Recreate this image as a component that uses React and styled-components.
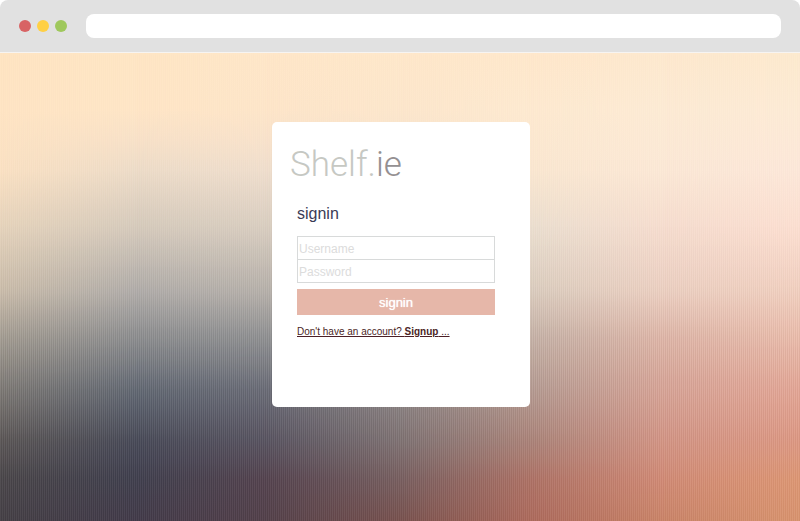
import React from "react";
import styled, { createGlobalStyle } from "styled-components";

const GlobalStyle = createGlobalStyle`
  *, *::before, *::after { box-sizing: border-box; }
  body { margin: 0; background: #fff; font-family: "Liberation Sans", Arial, sans-serif; }
`;

const Window = styled.div`
  display: flex;
  flex-direction: column;
  min-height: 100vh;
  border-radius: 8px 8px 0 0;
  overflow: hidden;
`;

const Toolbar = styled.header`
  display: flex;
  align-items: center;
  gap: 19px;
  height: 53px;
  padding: 0 19px;
  background: #e1e1e1;
  border-bottom: 1px solid #f6f4f2;
`;

const Lights = styled.div`
  display: flex;
  gap: 6px;
`;

const Light = styled.button`
  width: 12px;
  height: 12px;
  padding: 0;
  border: 0;
  border-radius: 50%;
  background: ${(p) => p.$color};
`;

const Address = styled.input`
  flex: 1;
  min-width: 0;
  height: 24px;
  padding: 0 10px;
  border: 0;
  border-radius: 8px;
  background: #fff;
  font: 13px "Liberation Sans", Arial, sans-serif;
`;

const Page = styled.main`
  position: relative;
  isolation: isolate;
  flex: 1;
  display: flex;
  justify-content: center;
  align-items: flex-start;
  padding: 69px 14px 69px 16px;
`;

const Backdrop = styled.div`
  position: absolute;
  inset: 0;
  z-index: -1;
`;

const Wash = styled.div`
  position: absolute;
  inset: 0;
  background: linear-gradient(${(p) => p.$stops});
  mask-image: ${(p) =>
    p.$to ? `linear-gradient(90deg, transparent ${p.$from}%, #000 ${p.$to}%)` : "none"};
`;

const Stripes = styled.div`
  position: absolute;
  inset: 0;
  background: repeating-linear-gradient(90deg, rgba(255, 255, 255, 0.07) 0 1px, rgba(0, 0, 0, 0.04) 1px 2px);
  mask-image: linear-gradient(rgba(0, 0, 0, 0.15), rgba(0, 0, 0, 0.3) 35%, #000 65%, rgba(0, 0, 0, 0.7));
`;

const Card = styled.section`
  width: 258px;
  min-height: 285px;
  padding: 22px 19px 20px 18px;
  border-radius: 5px;
  background: #fff;
`;

const Logo = styled.h1`
  margin: 0;
  color: #c6c8c3;
  font: 300 35px/42px Roboto, "Liberation Sans", sans-serif;
`;

const LogoEnd = styled.span`
  color: #949092;
`;

const Form = styled.form`
  display: flex;
  flex-direction: column;
  padding: 17px 16px 0 7px;
`;

const Title = styled.h2`
  margin: 0 0 11px;
  color: #3a3b55;
  font-size: 16px;
  line-height: 22px;
  font-weight: 400;
`;

const Fields = styled.div`
  display: flex;
  flex-direction: column;
  gap: 1px;
  border: 1px solid #d8dada;
  background: #d8dada;
`;

const Field = styled.input`
  width: 100%;
  height: 22px;
  padding: 1px 1px 0;
  border: 0;
  background: #fff;
  color: #3a3b55;
  font: 12px "Liberation Sans", Arial, sans-serif;
  &::placeholder { color: #dcdcdc; opacity: 1; }
`;

const Submit = styled.button`
  height: 26px;
  margin: 6px 0 11px;
  padding: 0;
  border: 0;
  background: #e6b7a9;
  color: #fff;
  font: 13px "Liberation Sans", Arial, sans-serif;
  text-shadow: 0 0 1px #fff;
`;

const SignupLink = styled.a`
  align-self: flex-start;
  color: #4b1f26;
  font-size: 10px;
  line-height: 12px;
  text-decoration: underline;
`;

const lights = [
  { name: "Close", color: "#d86364" },
  { name: "Minimize", color: "#ffd045" },
  { name: "Zoom", color: "#9fc85c" },
];

const washes = [
  { stops: "#ffe5c3, #ffe5c5 12%, #fbe2c4 25%, #e5d3bc 38%, #cbbdab 51%, #a39c92 61%, #7d7975 72%, #5b5656 83%, #4a464a 91%, #443f45" },
  { from: 0, to: 17, stops: "#ffe6c5, #ffe6c7 12%, #f9e2c9 18%, #eeddc9 25%, #d5cabc 38%, #b1adaa 51%, #8c8d8f 61%, #626873 72%, #484a58 83%, #403f4e 91%, #423a49" },
  { from: 17, to: 33, stops: "#ffe7c9, #fee6ca 12%, #f9e3cc 18%, #f0dfce 25%, #d8cdc0 38%, #b7b1ab 51%, #8f9092 61%, #696b76 72%, #585360 83%, #54434f 91%, #53404a" },
  { from: 33, to: 50, stops: "#ffe8cb, #fde7cd 12%, #f3e2cf 25%, #ddd2c6 38%, #c2bab3 51%, #a39d9b 61%, #8b8383 74%, #7f7273 83%, #785f60 91%, #79524f" },
  { from: 50, to: 66, stops: "#ffe8cc, #feead1 12%, #fbe8d2 25%, #ebdfd0 38%, #dccdbf 51%, #c6b2a7 61%, #b59b92 72%, #ab8379 83%, #ae7266 91%, #ad6a5c" },
  { from: 66, to: 83, stops: "#fee9cf, #fdebd5 12%, #fce9d7 25%, #f6ddcf 38%, #edd0c2 51%, #dfb6a8 61%, #d8a497 72%, #d49585 83%, #d28b76 91%, #cb8468" },
  { from: 83, to: 100, stops: "#fdeacf, #fdebd6 12%, #fde8da 25%, #fcdfd1 38%, #f2d0c0 51%, #ebbcab 61%, #e4a696 72%, #dd9883 83%, #de9774 91%, #d9946f" },
];

export default function App() {
  return (
    <>
      <GlobalStyle />
      <Window>
        <Toolbar>
          <Lights>
            {lights.map((l) => (
              <Light key={l.name} type="button" aria-label={l.name} $color={l.color} />
            ))}
          </Lights>
          <Address type="text" aria-label="Address" />
        </Toolbar>
        <Page>
          <Backdrop aria-hidden="true">
            {washes.map((w) => (
              <Wash key={w.stops} $from={w.from} $to={w.to} $stops={w.stops} />
            ))}
            <Stripes />
          </Backdrop>
          <Card>
            <Logo>
              Shelf.<LogoEnd>ie</LogoEnd>
            </Logo>
            <Form onSubmit={(e) => e.preventDefault()}>
              <Title>signin</Title>
              <Fields>
                <Field type="text" aria-label="Username" placeholder="Username" />
                <Field type="password" aria-label="Password" placeholder="Password" />
              </Fields>
              <Submit type="submit">signin</Submit>
              <SignupLink href="#signup">
                Don't have an account? <strong>Signup</strong> ...
              </SignupLink>
            </Form>
          </Card>
        </Page>
      </Window>
    </>
  );
}
